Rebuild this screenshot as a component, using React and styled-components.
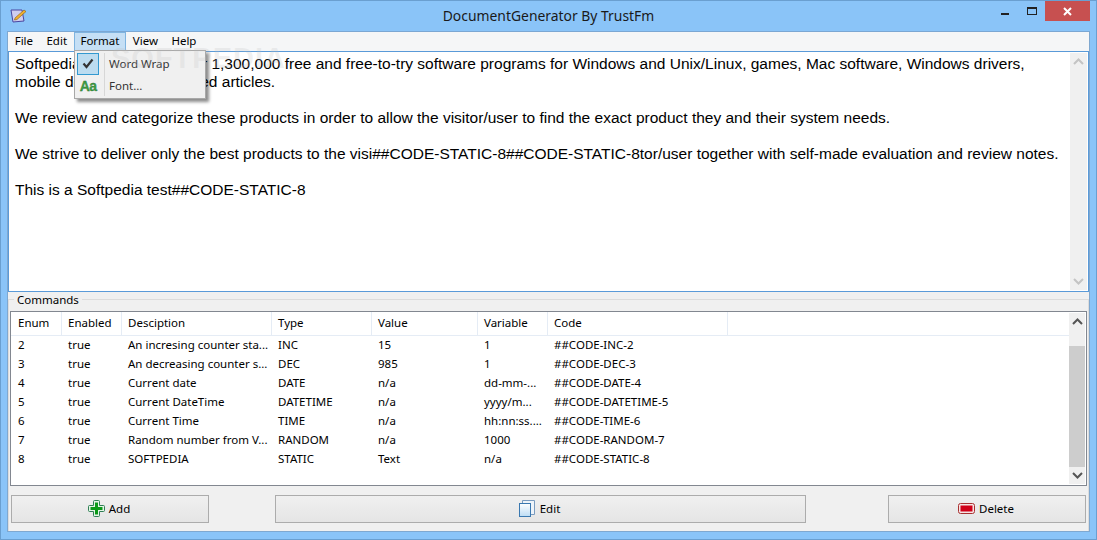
import React from "react";
import styled, { createGlobalStyle } from "styled-components";

const uiFont = `"Noto Sans", "Open Sans", sans-serif`;

const GlobalStyle = createGlobalStyle`
  html, body {
    margin: 0;
    padding: 0;
    background: #8ac4f8;
  }
  * {
    box-sizing: border-box;
  }
`;

const Window = styled.div`
  position: relative;
  width: 1097px;
  height: 540px;
  overflow: hidden;
  display: flex;
  flex-direction: column;
  background: #8ac4f8;
  border: 1px solid #6a9fd0;
  font-family: ${uiFont};
  font-size: 11.5px;
  color: #000;
`;

const TitleBar = styled.div`
  position: relative;
  height: 30px;
  flex: none;
  padding-bottom: 2px;
  display: flex;
  align-items: center;
  justify-content: center;
  font-size: 13.9px;
  color: #1a1a1a;
`;

const AppIcon = styled.svg`
  position: absolute;
  left: 9px;
  top: 7px;
`;

const Controls = styled.div`
  position: absolute;
  right: 6px;
  top: 0;
  display: flex;
  align-items: center;
  height: 20px;
`;

const CtrlButton = styled.div`
  width: ${(p) => p.$w}px;
  height: 20px;
  display: flex;
  align-items: center;
  justify-content: center;
  background: ${(p) => p.$bg || "transparent"};
`;

const Client = styled.div`
  flex: 1;
  margin: 0 6px 7px;
  display: flex;
  flex-direction: column;
  background: #f0f0f0;
  min-height: 0;
  border: 1px solid #7fa8d0;
  border-top: none;
`;

const MenuBar = styled.div`
  height: 20px;
  flex: none;
  display: flex;
  background: #f5f6f7;
  border-top: 1px solid #7ba7d3;
`;

const MenuItem = styled.div`
  height: 19px;
  padding: 0 5.7px 2px;
  display: flex;
  align-items: center;
  border: 1px solid ${(p) => (p.$open ? "#7fb4e0" : "transparent")};
  background: ${(p) => (p.$open ? "#c5dff5" : "transparent")};
`;

const Editor = styled.div`
  height: 241px;
  flex: none;
  display: flex;
  background: #fff;
  border: 1px solid #5a9ad8;
`;

const EditorText = styled.div`
  flex: 1;
  padding: 3px 5px 3px 6px;
  font-family: "Liberation Sans", Arial, sans-serif;
  font-size: 15.5px;
  line-height: 18px;
  color: #000;
`;

const Para = styled.p`
  margin: 0 0 18px;
  white-space: pre-line;
`;

const EditorScroll = styled.div`
  width: 17px;
  margin: 1px;
  display: flex;
  flex-direction: column;
  justify-content: space-between;
  align-items: center;
  background: #f0f0f0;
`;

const ArrowBox = styled.div`
  height: 17px;
  display: flex;
  align-items: center;
  justify-content: center;
`;

const Group = styled.div`
  flex: 1;
  position: relative;
  display: flex;
  flex-direction: column;
  padding: 19px 2px 0;
  min-height: 0;
`;

const GroupFrame = styled.div`
  position: absolute;
  inset: 7px 0 0;
  border: 1px solid #dcdcdc;
  border-bottom: none;
`;

const GroupLabel = styled.div`
  position: absolute;
  top: 0;
  left: 6px;
  padding: 0 3px;
  background: #f0f0f0;
  line-height: 15px;
`;

const ListBox = styled.div`
  position: relative;
  height: 175px;
  flex: none;
  display: flex;
  background: #fff;
  border: 1px solid #828790;
`;

const ListMain = styled.div`
  flex: 1;
  min-width: 0;
`;

const HeaderRow = styled.div`
  display: flex;
  height: 24px;
  border-bottom: 1px solid #e5ecf5;
`;

const HeaderCell = styled.div`
  width: ${(p) => p.$w}px;
  flex: none;
  padding: 0 0 2px ${(p) => p.$pad}px;
  display: flex;
  align-items: center;
  border-right: 1px solid #e5ecf5;
`;

const DataRow = styled.div`
  display: flex;
  height: 19px;
  padding-bottom: 2px;
  align-items: center;
`;

const DataCell = styled.div`
  width: ${(p) => p.$w}px;
  flex: none;
  padding-left: ${(p) => p.$pad}px;
  white-space: nowrap;
`;

const ListScroll = styled.div`
  width: 16px;
  flex: none;
  margin: 1px 1px 1px 0;
  display: flex;
  flex-direction: column;
  background: #f0f0f0;
`;

const Thumb = styled.div`
  flex: 1;
  background: #cdcdcd;
  margin-top: 16px;
`;

const ButtonRow = styled.div`
  position: relative;
  display: flex;
  padding: 9px 1px 0;
`;

const ActionButton = styled.div`
  width: ${(p) => p.$w}px;
  height: 28px;
  margin-left: ${(p) => p.$gap || 0}px;
  padding: 0 2px 1px 0;
  display: flex;
  align-items: center;
  justify-content: center;
  gap: 4px;
  border: 1px solid #acacac;
  background: linear-gradient(#f0f0f0, #e5e5e5);
`;

const Dropdown = styled.div`
  position: absolute;
  left: 73px;
  top: 49px;
  width: 132px;
  height: 49px;
  padding: 2px;
  background: #f0f0f0;
  border: 1px solid #a8a8a8;
  box-shadow: 3px 3px 3px rgba(0, 0, 0, 0.45);
`;

const DropSeparator = styled.div`
  position: absolute;
  left: 29px;
  top: 2px;
  bottom: 2px;
  width: 1px;
  background: #d7d7d7;
`;

const DropRow = styled.div`
  height: 22px;
  padding-bottom: 1px;
  display: flex;
  align-items: center;
  gap: 10px;
  color: #333;
`;

const CheckBox = styled.div`
  width: 22px;
  height: 22px;
  flex: none;
  display: flex;
  align-items: center;
  justify-content: center;
  background: ${(p) => (p.$on ? "#bcdcf0" : "transparent")};
  border: 1px solid ${(p) => (p.$on ? "#3399d0" : "transparent")};
`;

const FontGlyph = styled.span`
  font-family: "Liberation Sans", sans-serif;
  font-weight: bold;
  font-size: 14px;
  color: #3f9f45;
  -webkit-text-stroke: 0.3px #1f6a2c;
  letter-spacing: -0.6px;
`;

const Watermark = styled.div`
  position: absolute;
  left: 110px;
  top: 41px;
  font-family: "Liberation Sans", sans-serif;
  font-weight: bold;
  font-size: 29px;
  letter-spacing: 1px;
  color: rgba(190, 190, 190, 0.22);
  pointer-events: none;
`;

const widths = [51, 60, 150, 100, 106, 70, 180];
const headers = ["Enum", "Enabled", "Desciption", "Type", "Value", "Variable", "Code"];
const rows = [
  ["2", "true", "An incresing counter sta...", "INC", "15", "1", "##CODE-INC-2"],
  ["3", "true", "An decreasing counter s...", "DEC", "985", "1", "##CODE-DEC-3"],
  ["4", "true", "Current date", "DATE", "n/a", "dd-mm-...", "##CODE-DATE-4"],
  ["5", "true", "Current DateTime", "DATETIME", "n/a", "yyyy/m...", "##CODE-DATETIME-5"],
  ["6", "true", "Current Time", "TIME", "n/a", "hh:nn:ss....", "##CODE-TIME-6"],
  ["7", "true", "Random number from V...", "RANDOM", "n/a", "1000", "##CODE-RANDOM-7"],
  ["8", "true", "SOFTPEDIA", "STATIC", "Text", "n/a", "##CODE-STATIC-8"],
];

const Chevron = ({ up, color }) => (
  <svg width="11" height="7" viewBox="0 0 11 7">
    <path
      d={up ? "M1 6 L5.5 1.5 L10 6" : "M1 1 L5.5 5.5 L10 1"}
      fill="none"
      stroke={color}
      strokeWidth="2"
    />
  </svg>
);

export default function App() {
  return (
    <Window>
      <GlobalStyle />
      <TitleBar>
        <AppIcon width="17" height="16" viewBox="0 0 17 16">
          <path d="M1 2 L12 2 L14 13 L3 14 Z" fill="#cfcdf0" stroke="#4a46a0" />
          <path d="M5 10 L14 2 L16 3.5 L7 11.5 L4.5 12 Z" fill="#f0b030" stroke="#8a5a10" strokeWidth="0.6" />
        </AppIcon>
        DocumentGenerator By TrustFm
        <Controls>
          <CtrlButton $w={30}>
            <svg width="9" height="9" viewBox="0 0 9 9">
              <rect x="1" y="6" width="8" height="2" fill="#222" />
            </svg>
          </CtrlButton>
          <CtrlButton $w={26}>
            <svg width="11" height="9" viewBox="0 0 11 9">
              <rect x="0.5" y="0.5" width="9" height="7" fill="none" stroke="#222" />
              <rect x="0" y="0" width="10" height="2" fill="#222" />
            </svg>
          </CtrlButton>
          <CtrlButton $w={45} $bg="#c75050">
            <svg width="9" height="9" viewBox="0 0 9 9">
              <path d="M1 1 L8 8 M8 1 L1 8" stroke="#fff" strokeWidth="2" />
            </svg>
          </CtrlButton>
        </Controls>
      </TitleBar>

      <Client>
        <MenuBar>
          <MenuItem>File</MenuItem>
          <MenuItem>Edit</MenuItem>
          <MenuItem $open>Format</MenuItem>
          <MenuItem>View</MenuItem>
          <MenuItem>Help</MenuItem>
        </MenuBar>

        <Editor>
          <EditorText>
            <Para>
              {"Softpedia is a library of over 1,300,000 free and free-to-try software programs for Windows and Unix/Linux, games, Mac software, Windows drivers,\nmobile devices and IT-related articles."}
            </Para>
            <Para>We review and categorize these products in order to allow the visitor/user to find the exact product they and their system needs.</Para>
            <Para>We strive to deliver only the best products to the visi##CODE-STATIC-8##CODE-STATIC-8tor/user together with self-made evaluation and review notes.</Para>
            <Para>This is a Softpedia test##CODE-STATIC-8</Para>
          </EditorText>
          <EditorScroll>
            <ArrowBox><Chevron up color="#c4c4c4" /></ArrowBox>
            <ArrowBox><Chevron color="#c4c4c4" /></ArrowBox>
          </EditorScroll>
        </Editor>

        <Group>
          <GroupFrame />
          <GroupLabel>Commands</GroupLabel>
          <ListBox>
            <ListMain>
              <HeaderRow>
                {headers.map((h, i) => (
                  <HeaderCell key={h} $w={widths[i]} $pad={i === 0 ? 7 : 6}>{h}</HeaderCell>
                ))}
              </HeaderRow>
              {rows.map((r) => (
                <DataRow key={r[0]}>
                  {r.map((c, i) => (
                    <DataCell key={i} $w={widths[i]} $pad={i === 0 ? 7 : 6}>{c}</DataCell>
                  ))}
                </DataRow>
              ))}
            </ListMain>
            <ListScroll>
              <ArrowBox><Chevron up color="#555" /></ArrowBox>
              <Thumb />
              <ArrowBox><Chevron color="#555" /></ArrowBox>
            </ListScroll>
          </ListBox>

          <ButtonRow>
            <ActionButton $w={198}>
              <svg width="17" height="17" viewBox="0 0 17 17">
                <path d="M5.5 1.5 Q5.5 0.5 6.5 0.5 H10.5 Q11.5 0.5 11.5 1.5 V5.5 H15.5 Q16.5 5.5 16.5 6.5 V10.5 Q16.5 11.5 15.5 11.5 H11.5 V15.5 Q11.5 16.5 10.5 16.5 H6.5 Q5.5 16.5 5.5 15.5 V11.5 H1.5 Q0.5 11.5 0.5 10.5 V6.5 Q0.5 5.5 1.5 5.5 H5.5 Z" fill="#e4f4e6" stroke="#2f7f55" />
                <path d="M7 2.5 H10 V7 H14.5 V10 H10 V14.5 H7 V10 H2.5 V7 H7 Z" fill="#0a9a18" />
              </svg>
              Add
            </ActionButton>
            <ActionButton $w={531} $gap={66}>
              <svg width="17" height="17" viewBox="0 0 17 17">
                <defs>
                  <linearGradient id="pageFill" x1="0" y1="0" x2="0" y2="1">
                    <stop offset="0" stopColor="#ffffff" />
                    <stop offset="1" stopColor="#bcdcf4" />
                  </linearGradient>
                </defs>
                <path d="M3.5 3 V0.5 H15.5 V14.5 H11" fill="#eef4fa" stroke="#7a9cc0" />
                <rect x="0.5" y="3.5" width="11" height="13" fill="url(#pageFill)" stroke="#3a78b0" />
              </svg>
              Edit
            </ActionButton>
            <ActionButton $w={198} $gap={82}>
              <svg width="17" height="11" viewBox="0 0 17 11">
                <rect x="0.5" y="0.5" width="16" height="10" rx="2" fill="#f6e4e4" stroke="#a83030" />
                <rect x="2.5" y="2.5" width="12" height="6" fill="#d00018" />
              </svg>
              Delete
            </ActionButton>
          </ButtonRow>
        </Group>
      </Client>

      <Dropdown>
        <DropSeparator />
        <DropRow>
          <CheckBox $on>
            <svg width="12" height="11" viewBox="0 0 12 11">
              <path d="M1.5 5.5 L4.5 9 L10.5 1.5" fill="none" stroke="#333" strokeWidth="2.2" />
            </svg>
          </CheckBox>
          Word Wrap
        </DropRow>
        <DropRow>
          <CheckBox><FontGlyph>Aa</FontGlyph></CheckBox>
          Font...
        </DropRow>
      </Dropdown>

      <Watermark>SOFTPEDIA</Watermark>
    </Window>
  );
}
